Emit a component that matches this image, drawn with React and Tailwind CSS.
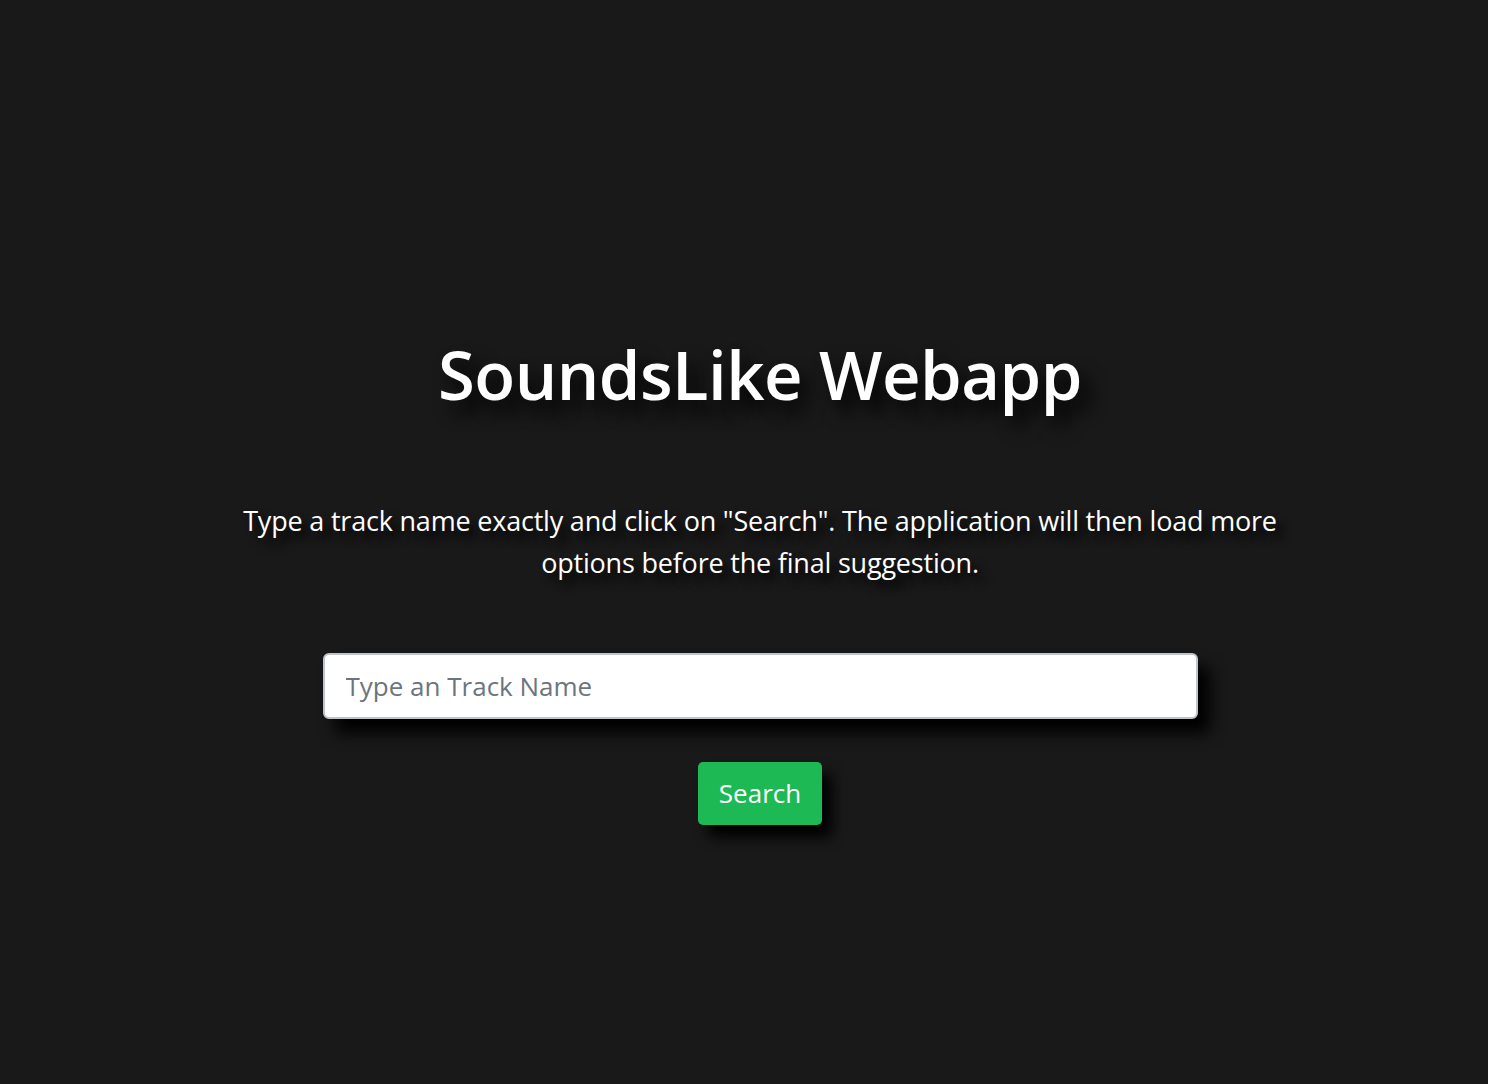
export default function App() {
  return (
    <div className="min-h-screen bg-[#191919] font-['Open_Sans',sans-serif] text-white">
      <div className="flex flex-col items-center pl-[32px] pt-[334px]">
        <h1 className="text-[67px] font-semibold leading-[1.2] tracking-[-0.5px] [text-shadow:10px_12px_18px_#000]">
          SoundsLike Webapp
        </h1>

        <p className="mt-[86px] max-w-[1080px] text-center text-[27px] leading-[42px] tracking-[-0.2px] [text-shadow:8px_8px_10px_#000]">
          Type a track name exactly and click on "Search". The application will then load more options before the final suggestion.
        </p>

        <input
          type="text"
          placeholder="Type an Track Name"
          className="mt-[69px] h-[66px] w-[875px] rounded-[6px] border-2 border-[#bfc4c9] bg-white px-[21px] text-[26px] text-[#495057] shadow-[12px_14px_16px_#000] outline-none placeholder:text-[#6c757d]"
        />

        <button className="mt-[43px] h-[63px] rounded-[5px] bg-[#1db954] px-[21px] text-[26px] text-white shadow-[10px_12px_14px_#000]">
          Search
        </button>
      </div>
    </div>
  );
}
